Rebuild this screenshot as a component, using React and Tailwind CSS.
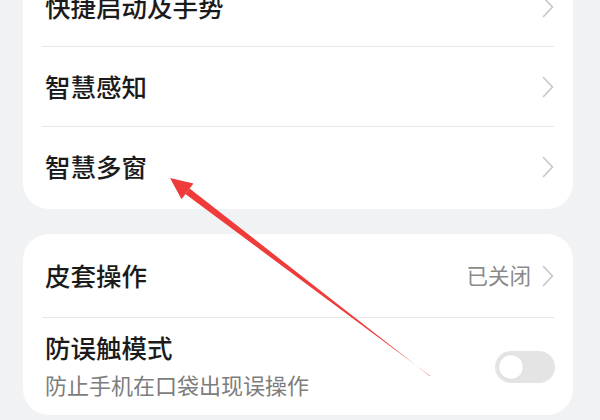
const FONT = { fontFamily: '"Noto Sans CJK SC", "Noto Sans", sans-serif' };

const Chevron = () => (
  <svg width="14" height="24" viewBox="0 0 14 24" fill="none" className="-mr-[2px]">
    <path d="M2.5 2.5 L11.5 12 L2.5 21.5" stroke="#c6c6c6" strokeWidth="1.6" strokeLinecap="round" strokeLinejoin="round" />
  </svg>
);

const NavRow = ({ title, value, h }) => (
  <div className={`flex items-center justify-between pl-[22px] pr-[20px] ${h}`}>
    <span className="text-[25.5px] font-medium text-[#1b1b1b]">{title}</span>
    <div className="flex items-center gap-[10px]">
      {value && <span className="text-[21.5px] text-[#8a8a8a]">{value}</span>}
      <Chevron />
    </div>
  </div>
);

const Divider = () => <div className="mx-[19px] h-px bg-[#e8e8e8]" />;

// 红色箭头指向「智慧多窗」
const Arrow = () => (
  <svg className="absolute inset-0 pointer-events-none" width="600" height="420" viewBox="0 0 600 420">
    <polygon points="430.3,376.4 429.7,375.6 185.4,194.1 189.6,188.5" fill="#ef3b3a" />
    <polygon points="170,178 193.5,183.4 181.5,199.2" fill="#ef3b3a" />
  </svg>
);

export default function App() {
  return (
    <div className="relative w-[600px] h-[420px] overflow-hidden bg-[#f1f2f4]" style={FONT}>
      <div className="pl-[23px] pr-[27px]">
        <div className="-mt-[33px] bg-white rounded-[26px] pb-[3px]">
          <NavRow title="快捷启动及手势" h="h-[79px]" />
          <Divider />
          <NavRow title="智慧感知" h="h-[79px]" />
          <Divider />
          <NavRow title="智慧多窗" h="h-[79px]" />
        </div>
        <div className="mt-[25px] bg-white rounded-[26px]">
          <NavRow title="皮套操作" value="已关闭" h="h-[83px]" />
          <Divider />
          <div className="flex items-center justify-between pl-[22px] pr-[18px] h-[97px]">
            <div className="flex flex-col gap-[3px] -mt-[2px]">
              <span className="text-[25.5px] font-medium text-[#1b1b1b] leading-[34px]">防误触模式</span>
              <span className="text-[22px] text-[#7d7d7d] leading-[34px]">防止手机在口袋出现误操作</span>
            </div>
            <div className="w-[60px] h-[32px] rounded-full bg-[#e4e4e4] p-[3px] flex items-center">
              <div className="w-[26px] h-[26px] rounded-full bg-white border border-[#dcdcdc]" />
            </div>
          </div>
        </div>
      </div>
      <Arrow />
    </div>
  );
}
